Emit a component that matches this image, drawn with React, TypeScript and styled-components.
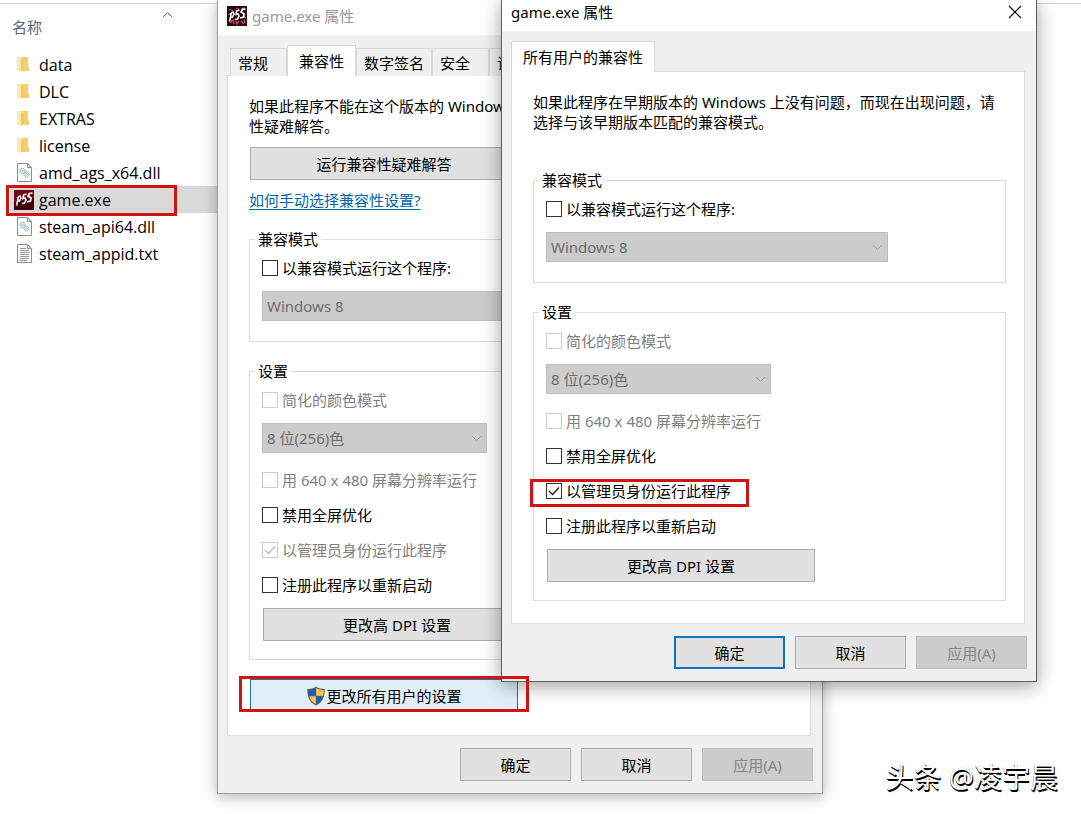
import React, { useState } from "react";
import styled, { createGlobalStyle, css } from "styled-components";

const GlobalStyle = createGlobalStyle`
  * { box-sizing: border-box; }
  body {
    margin: 0;
    background: #fff;
    color: #000;
    font: 15px/20px "Noto Sans", "Noto Sans CJK SC", sans-serif;
  }
  button, select, input { font: inherit; color: inherit; }
`;

/* ---------- desktop and file list ---------- */

const Desktop = styled.main`
  position: relative;
  min-height: 100vh;
  overflow: hidden;
  padding-top: 3px;
`;

const Explorer = styled.section`
  border-top: 1px solid #d4d4d4;
`;

const ColumnHeader = styled.header`
  position: relative;
  width: 320px;
  padding: 13px 12px;
  color: #51647c;
  line-height: 21px;
`;

const SortMark = styled.svg`
  position: absolute;
  top: 7px;
  left: 161px;
`;

const FileList = styled.ul`
  width: 320px;
  margin: 0;
  padding: 0 0 0 10px;
  font-family: "Open Sans", "Noto Sans CJK SC", sans-serif;
  font-size: 16px;
  list-style: none;
`;

const FileRow = styled.li<{ $selected?: boolean }>`
  position: relative;
  display: flex;
  align-items: center;
  gap: 5px;
  height: 27px;
  padding-left: 4px;
  background: ${(p) => (p.$selected ? "#d9d9d9" : "transparent")};
`;

const IconCell = styled.span`
  display: flex;
  justify-content: center;
  width: 20px;
`;

const Annotation = styled.span<{ $inset: string }>`
  position: absolute;
  z-index: 3;
  inset: ${(p) => p.$inset};
  border: 3px solid #d01414;
  pointer-events: none;
`;

/* ---------- windows ---------- */

const Window = styled.section<{ $front?: boolean }>`
  position: absolute;
  top: 0;
  background: #f0f0f0;
  border: 1px solid;
  border-top: 0;
  ${(p) =>
    p.$front
      ? css`
          left: 501px;
          width: 536px;
          z-index: 2;
          border-color: #606060;
          box-shadow: 0 4px 18px rgba(0, 0, 0, 0.38);
        `
      : css`
          left: 217px;
          width: 606px;
          border-color: #a0a0a0;
          box-shadow: 0 3px 14px rgba(0, 0, 0, 0.3);
        `}
`;

const TitleBar = styled.header<{ $front?: boolean }>`
  display: flex;
  align-items: center;
  gap: 5px;
  height: ${(p) => (p.$front ? 31 : 35)}px;
  padding: ${(p) => (p.$front ? "0 14px 7px 9px" : "0 9px 3px")};
  background: #fff;
  color: ${(p) => (p.$front ? "#000" : "#999")};
`;

const Title = styled.h1`
  flex: 1;
  margin: 0;
  font-size: 15px;
  font-weight: 400;
`;

const CloseButton = styled.button`
  display: flex;
  padding: 0;
  border: 0;
  background: none;
`;

const WindowBody = styled.div`
  padding: 10px 11px 12px 9px;
`;

const TabStrip = styled.nav<{ $inset?: boolean }>`
  display: flex;
  align-items: flex-end;
  padding-left: ${(p) => (p.$inset ? 3 : 0)}px;
  overflow: hidden;
`;

const Tab = styled.button<{ $active?: boolean }>`
  flex: none;
  min-width: 57px;
  height: ${(p) => (p.$active ? 31 : 28)}px;
  padding: 0 ${(p) => (p.$active ? 11 : 7)}px;
  border: 1px solid #d9d9d9;
  border-bottom: 0;
  background: ${(p) => (p.$active ? "#fff" : "#f0f0f0")};
  text-align: left;
  & + & { border-left-width: ${(p) => (p.$active ? 1 : 0)}px; }
`;

const Panel = styled.div<{ $front?: boolean }>`
  margin-top: -1px;
  padding: ${(p) => (p.$front ? "20px 18px 3px 21px" : "20px 21px 23px")};
  border: 1px solid #dcdcdc;
  background: #fff;
`;

const Intro = styled.p<{ $gap: number }>`
  margin: 0 0 ${(p) => p.$gap}px;
`;

const HelpLink = styled.a`
  display: block;
  width: max-content;
  margin: 10px 0 19px;
  color: #0066a7;
  text-underline-offset: 3px;
`;

const Group = styled.fieldset`
  width: 473px;
  max-width: 100%;
  margin: 0 0 19px;
  padding: 0 12px 18px;
  border: 1px solid #dcdcdc;
`;

const Legend = styled.legend`
  margin-left: -7px;
  padding: 0 3px;
  line-height: 20px;
`;

const Stack = styled.div`
  display: flex;
  flex-direction: column;
  align-items: flex-start;
  gap: 15px;
  padding-top: 9px;
`;

const CheckLabel = styled.label<{ $disabled?: boolean }>`
  position: relative;
  display: flex;
  align-items: center;
  gap: 4px;
  height: 20px;
  color: ${(p) => (p.$disabled ? "#808080" : "#000")};
`;

const CheckBox = styled.span`
  display: grid;
  width: 16px;
  height: 16px;
  & > * { grid-area: 1 / 1; }
  svg { pointer-events: none; z-index: 1; }
`;

const CheckInput = styled.input`
  appearance: none;
  width: 16px;
  height: 16px;
  margin: 0;
  border: 1px solid #333;
  background: #fff;
  &:disabled { border-color: #ccc; }
`;

const SelectBox = styled.div<{ $width: number }>`
  display: grid;
  align-items: center;
  width: ${(p) => p.$width}px;
  margin: -2px 0 2px;
  & > * { grid-area: 1 / 1; }
  svg { justify-self: end; margin-right: 5px; pointer-events: none; }
`;

const SelectInput = styled.select`
  appearance: none;
  width: 100%;
  height: 30px;
  padding: 0 4px;
  border: 1px solid #bfbfbf;
  border-radius: 0;
  background: #ccc;
  color: #6d6d6d;
  opacity: 1;
`;

const PushButton = styled.button<{ $wide?: boolean; $look?: "default" | "hot" }>`
  display: flex;
  align-items: center;
  justify-content: center;
  width: ${(p) => (p.$wide ? 268 : 111)}px;
  height: 33px;
  padding: 0;
  border: 1px solid #adadad;
  background: #e1e1e1;
  ${(p) => p.$look === "default" && "border: 2px solid #1273bd;"}
  ${(p) => p.$look === "hot" && "border-color: #2b6f9f; background: #e1effa;"}
  &:disabled {
    border-color: #bfbfbf;
    background: #ccc;
    color: #868686;
  }
`;

const ButtonSlot = styled.div`
  position: relative;
  width: max-content;
  margin-left: 1px;
  ${Stack} > & { margin-top: -2px; }
`;

const Footer = styled.footer`
  display: flex;
  justify-content: flex-end;
  gap: 10px;
  margin: 12px -2px 0 0;
`;

const Watermark = styled.p`
  position: absolute;
  right: 23px;
  bottom: 21px;
  margin: 0;
  color: #fff;
  font-size: 28px;
  line-height: 32px;
  text-shadow: 1px 2px 0 #000, 0 1px 0 #000, 0 0 1px #aaa;
`;

/* ---------- drawings ---------- */

const FolderIcon = () => (
  <svg width="16" height="17" viewBox="0 0 16 17">
    <path d="M4 1h8v9l1 1v4H4z" fill="#fbdc8c" />
    <path d="M7 1h5v9l1 1v4H7z" fill="#f6d070" />
    <path d="M1 1h3.500l1.500 1.500V16l-5-1z" fill="#fbe7b2" />
    <path d="M5 2v13.500l2.500-1V4z" fill="#f0c860" />
  </svg>
);

const DllIcon = () => (
  <svg width="15" height="19" viewBox="0 0 15 19" fill="none">
    <path d="M.5.5h10l4 4v14H.5z" fill="#fdfdfd" stroke="#8d8d8d" />
    <path d="M10.500 .5v4h4" stroke="#8d8d8d" />
    <circle cx="5.500" cy="8" r="2.500" stroke="#7f9fb8" strokeDasharray="1.500 .5" />
    <circle cx="5.500" cy="8" r=".8" stroke="#7f9fb8" strokeWidth=".7" />
    <circle cx="9.500" cy="11.500" r="2.500" stroke="#7f9fb8" strokeDasharray="1.500 .5" />
    <circle cx="9.500" cy="11.500" r=".8" stroke="#7f9fb8" strokeWidth=".7" />
  </svg>
);

const TextIcon = () => (
  <svg width="15" height="19" viewBox="0 0 15 19" fill="none">
    <path d="M.5.5h10l4 4v14H.5z" fill="#fdfdfd" stroke="#8d8d8d" />
    <path d="M10.500 .5v4h4M3 4.500h6M3 6.500h9M3 8.500h9M3 10.500h9M3 12.500h9M3 14.500h9M3 16.500h7" stroke="#999" />
  </svg>
);

const GameIcon = ({ busy }: { busy?: boolean }) => (
  <svg width="20" height="20" viewBox="0 0 20 20" fill="none">
    <rect width="20" height="20" fill={busy ? "#1b0a0c" : "#6a0c13"} />
    <path d="M0 13l20-5v12H0z" fill={busy ? "#2c0a0e" : "#3a060a"} />
    {busy && (
      <path d="M2 3l4 2M9 2l3 1M14 3l4-1M3 17l3-3 1 4M9 15l1 3 2-3M14 15l3 3M17 14l1 3M1 8l3 1M17 10l2 2" stroke="#c4505c" strokeWidth="1.300" />
    )}
    <path d="M2.500 15.500L4.500 6.500M3 8l3-2 1 2-1.500 3-2 .5" stroke="#fff" strokeWidth="1.500" />
    <path d="M12.500 4L9.500 5 9 8.500l2-.5 1 2-1.500 3-2.500.5" stroke="#fff" strokeWidth="1.600" />
    <path d="M18.500 3l-3 .5-1.500 2.500 3 2-.5 3-3.500 1" stroke="#fff" strokeWidth="1.700" />
  </svg>
);

const Chevron = () => (
  <svg width="11" height="7" viewBox="0 0 11 7" fill="none" stroke="#a0a0a0">
    <path d="M1 1l4.500 4.500L10 1" />
  </svg>
);

const Shield = () => (
  <svg width="20" height="20" viewBox="0 0 20 20">
    <path d="M10 .5C7.500 2.300 4.500 3 1.300 3 1 10 3 16.500 10 19.500 17 16.500 19 10 18.700 3 15.500 3 12.500 2.300 10 .5z" fill="#5d6670" />
    <path d="M9.800 2C7.500 3.500 5 4.100 2.400 4.200c-.1 2 .1 3.900.6 5.600h6.800z" fill="#1d5fb0" />
    <path d="M10.200 2c2.300 1.500 4.800 2.100 7.400 2.200.1 2-.1 3.900-.6 5.600h-6.800z" fill="#fcc84c" />
    <path d="M3.200 10.200h6.600v8C6.300 16.500 4.200 13.800 3.200 10.200z" fill="#fcc84c" />
    <path d="M16.800 10.200h-6.600v8c3.500-1.700 5.600-4.400 6.600-8z" fill="#1d5fb0" />
  </svg>
);

/* ---------- parts ---------- */

type CheckProps = { label: string; checked?: boolean; disabled?: boolean; marked?: boolean };

function Check({ label, checked = false, disabled, marked }: CheckProps) {
  const [on, setOn] = useState(checked);
  return (
    <CheckLabel $disabled={disabled}>
      <CheckBox>
        <CheckInput type="checkbox" checked={on} disabled={disabled} onChange={() => setOn(!on)} />
        {on && (
          <svg width="16" height="16" viewBox="0 0 16 16" fill="none" stroke={disabled ? "#bdbdbd" : "#222"} strokeWidth="1.400">
            <path d="M3 8l3.500 3.500L13 4.500" />
          </svg>
        )}
      </CheckBox>
      {label}
      {marked && <Annotation $inset="-2px -18px -6px -16px" />}
    </CheckLabel>
  );
}

function Dropdown({ name, value, width }: { name: string; value: string; width: number }) {
  return (
    <SelectBox $width={width}>
      <SelectInput aria-label={name} disabled defaultValue={value}>
        <option>{value}</option>
      </SelectInput>
      <Chevron />
    </SelectBox>
  );
}

function CompatibilityGroups({ elevated }: { elevated?: boolean }) {
  return (
    <>
      <Group>
        <Legend>兼容模式</Legend>
        <Stack>
          <Check label="以兼容模式运行这个程序:" />
          <Dropdown name="兼容模式" value="Windows 8" width={342} />
        </Stack>
      </Group>
      <Group>
        <Legend>设置</Legend>
        <Stack>
          <Check label="简化的颜色模式" disabled />
          <Dropdown name="颜色模式" value="8 位(256)色" width={225} />
          <Check label="用 640 x 480 屏幕分辨率运行" disabled />
          <Check label="禁用全屏优化" />
          <Check label="以管理员身份运行此程序" checked disabled={!elevated} marked={elevated} />
          <Check label="注册此程序以重新启动" />
          <ButtonSlot>
            <PushButton $wide>更改高 DPI 设置</PushButton>
          </ButtonSlot>
        </Stack>
      </Group>
    </>
  );
}

function DialogButtons({ focused }: { focused?: boolean }) {
  return (
    <Footer>
      <PushButton $look={focused ? "default" : undefined}>确定</PushButton>
      <PushButton>取消</PushButton>
      <PushButton disabled>应用(A)</PushButton>
    </Footer>
  );
}

const files = [
  { name: "data", Icon: FolderIcon },
  { name: "DLC", Icon: FolderIcon },
  { name: "EXTRAS", Icon: FolderIcon },
  { name: "license", Icon: FolderIcon },
  { name: "amd_ags_x64.dll", Icon: DllIcon },
  { name: "game.exe", Icon: GameIcon, selected: true },
  { name: "steam_api64.dll", Icon: DllIcon },
  { name: "steam_appid.txt", Icon: TextIcon },
];

export default function App() {
  return (
    <Desktop>
      <GlobalStyle />
      <Explorer>
        <ColumnHeader>
          名称
          <SortMark width="13" height="8" viewBox="0 0 13 8" fill="none" stroke="#666">
            <path d="M2 6l4.500-4.500L11 6" />
          </SortMark>
        </ColumnHeader>
        <FileList>
          {files.map(({ name, Icon, selected }) => (
            <FileRow key={name} $selected={selected}>
              <IconCell>
                <Icon />
              </IconCell>
              {name}
              {selected && <Annotation $inset="-1px 143px -3px -4px" />}
            </FileRow>
          ))}
        </FileList>
      </Explorer>

      <Window>
        <TitleBar>
          <GameIcon busy />
          <Title>game.exe 属性</Title>
        </TitleBar>
        <WindowBody>
          <TabStrip $inset>
            <Tab>常规</Tab>
            <Tab $active>兼容性</Tab>
            <Tab>数字签名</Tab>
            <Tab>安全</Tab>
            <Tab>详</Tab>
          </TabStrip>
          <Panel>
            <Intro $gap={11}>
              如果此程序不能在这个版本的 Windows
              <br />
              性疑难解答。
            </Intro>
            <ButtonSlot>
              <PushButton $wide>运行兼容性疑难解答</PushButton>
            </ButtonSlot>
            <HelpLink href="#help">如何手动选择兼容性设置?</HelpLink>
            <CompatibilityGroups />
            <ButtonSlot>
              <PushButton $wide $look="hot">
                <Shield />
                更改所有用户的设置
              </PushButton>
              <Annotation $inset="-3px -11px 0 -11px" />
            </ButtonSlot>
          </Panel>
          <DialogButtons />
        </WindowBody>
      </Window>

      <Window $front>
        <TitleBar $front>
          <Title>game.exe 属性</Title>
          <CloseButton aria-label="关闭">
            <svg width="14" height="14" viewBox="0 0 14 14" fill="none" stroke="#000" strokeWidth="1.200">
              <path d="M1 1l12 12M13 1L1 13" />
            </svg>
          </CloseButton>
        </TitleBar>
        <WindowBody>
          <TabStrip>
            <Tab $active>所有用户的兼容性</Tab>
          </TabStrip>
          <Panel $front>
            <Intro $gap={38}>如果此程序在早期版本的 Windows 上没有问题，而现在出现问题，请选择与该早期版本匹配的兼容模式。</Intro>
            <CompatibilityGroups elevated />
          </Panel>
          <DialogButtons focused />
        </WindowBody>
      </Window>

      <Watermark>头条 @凌宇晨</Watermark>
    </Desktop>
  );
}
